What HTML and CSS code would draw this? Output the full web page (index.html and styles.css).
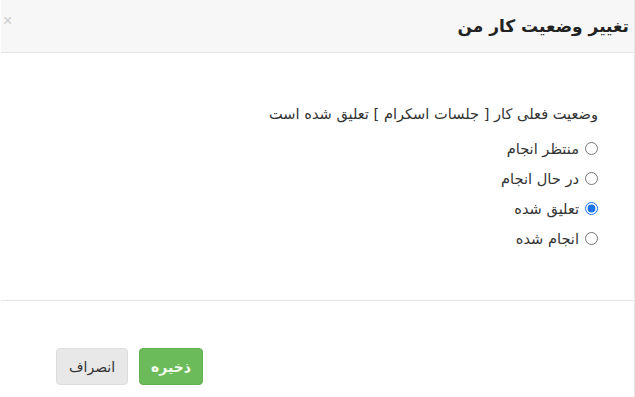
FILE: index.html
```html
<!DOCTYPE html>
<html lang="fa" dir="rtl">
<head>
    <meta charset="UTF-8">
    <title>تغییر وضعیت کار من</title>
    <link rel="stylesheet" href="styles.css">
</head>
<body>

    <div class="modal">
        <div class="modal-header">
            <h4 class="modal-title">تغییر وضعیت کار من</h4>
            <button type="button" class="close">&times;</button>
        </div>

        <div class="modal-body">
            <p class="status-msg">وضعیت فعلی کار [ جلسات اسکرام ] تعلیق شده است</p>
            <label class="radio-row"><input type="radio" name="status"> منتظر انجام</label>
            <label class="radio-row"><input type="radio" name="status"> در حال انجام</label>
            <label class="radio-row"><input type="radio" name="status" checked> تعلیق شده</label>
            <label class="radio-row"><input type="radio" name="status"> انجام شده</label>
        </div>

        <div class="modal-footer">
            <button type="button" class="btn btn-save">ذخیره</button>
            <button type="button" class="btn btn-cancel">انصراف</button>
        </div>
    </div>

</body>
</html>
```

FILE: styles.css
```css
body {
    margin: 0;
    padding: 0;
    background: #fff;
    font-family: 'DejaVu Sans', sans-serif;
    color: #333;
}

.modal {
    width: 633px;
    height: 397px;
    border-right: 1px solid #e5e5e5;
}

.modal-header {
    height: 52px;
    background-color: #f7f7f7;
    border-bottom: 1px solid #e5e5e5;
    display: flex;
    align-items: center;
    justify-content: space-between;
    padding: 0 5px 0 2px;
}

.modal-title {
    margin: 0;
    font-size: 17px;
    font-weight: bold;
    color: #222;
}

.close {
    border: none;
    background: none;
    padding: 0;
    font-size: 16px;
    color: #ccc;
    margin-top: -10px;
}

.modal-body {
    height: 248px;
    border-bottom: 1px solid #e5e5e5;
    padding: 50px 36px 0 0;
    box-sizing: border-box;
    font-size: 14.6px;
}

.status-msg {
    margin: 0 0 8px;
    line-height: 22px;
}

.radio-row {
    display: flex;
    align-items: center;
    gap: 6px;
    height: 30px;
}

.radio-row input {
    margin: 0;
    width: 13px;
    height: 13px;
    accent-color: #1a73e8;
}

.modal-footer {
    display: flex;
    justify-content: flex-end;
    gap: 11px;
    padding: 47px 0 0 55px;
}

.btn {
    height: 37px;
    border-radius: 4px;
    font-family: inherit;
    font-size: 14px;
    padding: 0 12px;
    cursor: pointer;
}

.btn-save {
    background-color: #6cbb5a;
    border: 1px solid #62b150;
    color: #f4fbf0;
    font-weight: bold;
    padding: 0 11px;
}

.btn-cancel {
    background-color: #e8e8e8;
    border: 1px solid #ddd;
    color: #333;
}
```
